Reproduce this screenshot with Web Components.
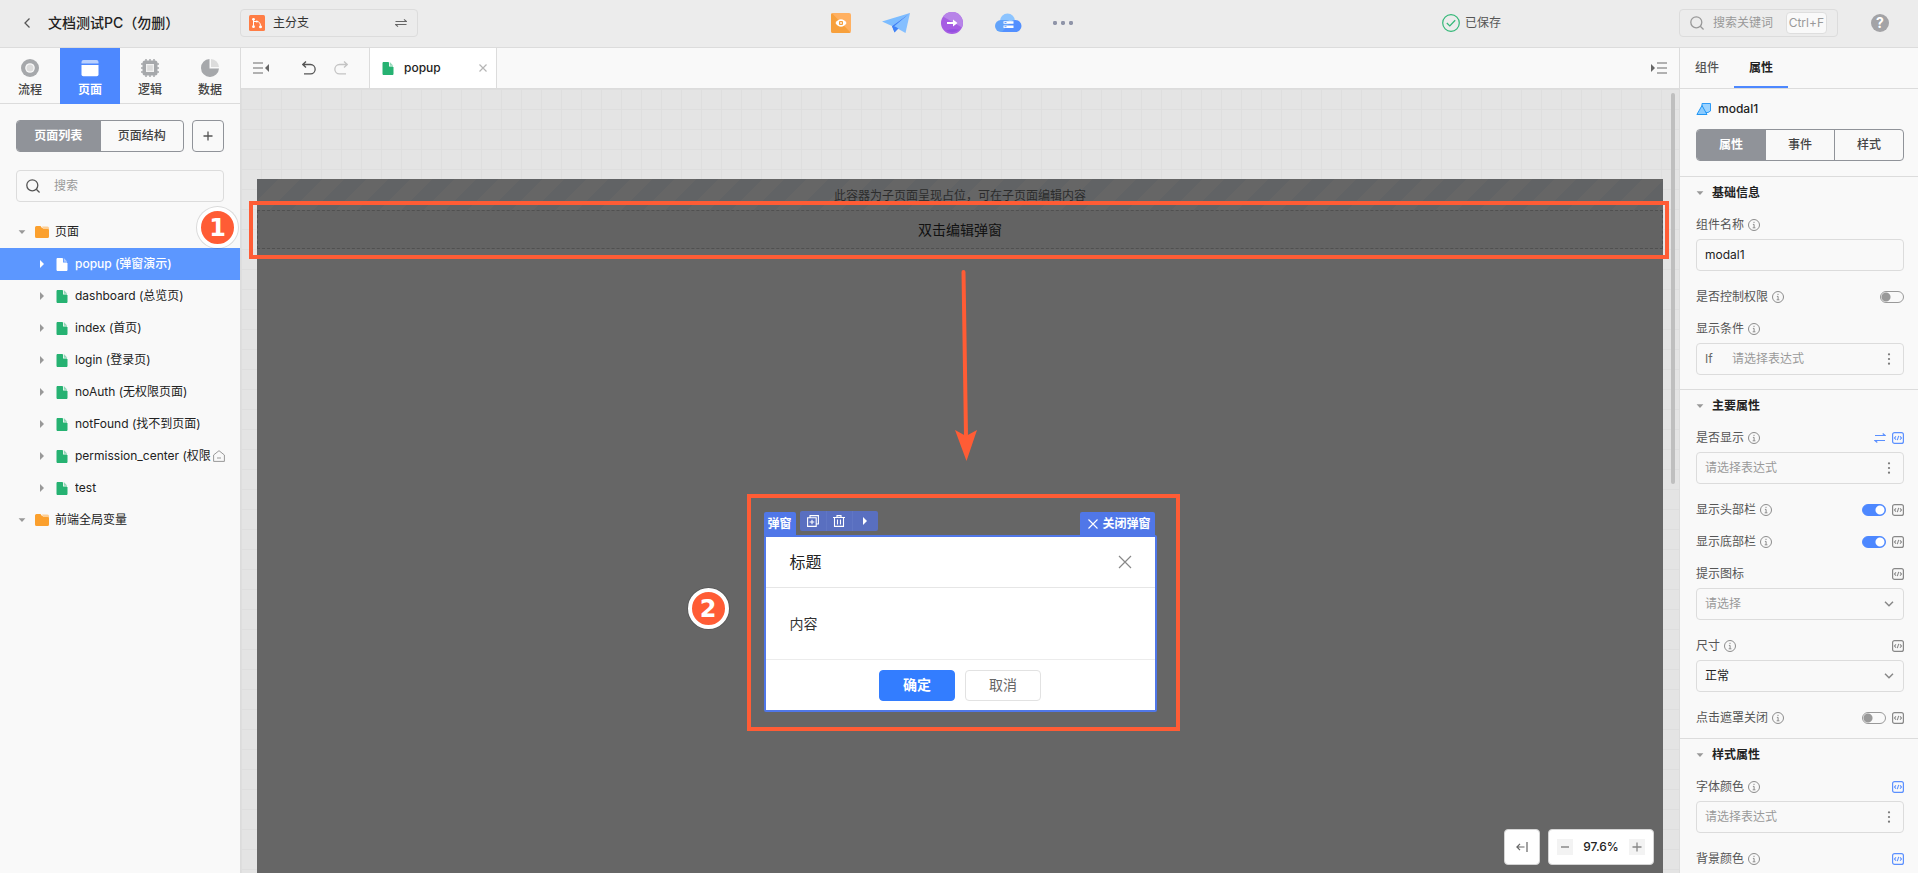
<!DOCTYPE html>
<html lang="zh-CN">
<head>
<meta charset="utf-8">
<title>文档测试PC（勿删）</title>
<style>
html, body { margin: 0; height: 100%; }
body { font: 12px/20px Inter, "Noto Sans CJK SC", sans-serif; color: #222; background: #f9f9f9; overflow: hidden; }
</style>
</head>
<body>
<app-shell></app-shell>
<script>
const BASE = `
*, *::before { box-sizing: border-box; }
button, input, select { font: inherit; color: inherit; margin: 0; padding: 0; border: 0; background: none; outline: 0; min-width: 0; }
button { cursor: pointer; display: flex; align-items: center; justify-content: center; }
input::placeholder { color: #999; opacity: 1; }
a { color: inherit; text-decoration: none; }
`;

function define(name, css, html) {
  customElements.define(name, class extends HTMLElement {
    connectedCallback() {
      if (this.shadowRoot) return;
      const t = document.createElement('template');
      t.innerHTML = `<style>${BASE}${css}</style>${typeof html === 'function' ? html(this) : html}`;
      this.attachShadow({ mode: 'open' }).append(t.content.cloneNode(true));
    }
  });
}

/* name: [width, height, markup] */
const ICONS = {
  back: [8, 12, '<path d="M6.500 1.500 2 6l4.500 4.500" fill="none" stroke="#555" stroke-width="1.300"/>'],
  branch: [16, 16, '<rect width="16" height="16" rx="1.500" fill="#ff7d45"/><path d="M4.500 4.500v7M4.500 6.500h3.200" fill="none" stroke="#fff"/><path d="M8.200 6.500c2 .2 3 1.500 3.300 4" fill="none" stroke="#fff"/><circle cx="4.500" cy="4.300" r="1.400" fill="#fff"/><circle cx="4.500" cy="11.700" r="1.400" fill="#fff"/><circle cx="11.500" cy="11.700" r="1.500" fill="#fff"/><circle cx="7.800" cy="6.500" r="1" fill="#fff"/>'],
  swap: [12, 8, '<path d="M.5 2.500h11L9 .4M11.500 5.500H.5L3 7.600" fill="none" stroke="currentColor" stroke-width="1.100"/>'],
  preview: [20, 20, '<rect width="20" height="20" rx="2" fill="#ffb061"/><path d="M0 2a2 2 0 0 1 1-1.700L19.500 19.500 18 20H2a2 2 0 0 1-2-2z" fill="#f7a03c"/><path d="M4.500 10C6 7.400 7.900 6.300 10 6.300s4 1.100 5.500 3.700c-1.500 2.600-3.400 3.700-5.500 3.700S6 12.600 4.500 10z" fill="#fff"/><rect x="8" y="8" width="4" height="4" rx="1" fill="#f7a03c"/><rect x="9.200" y="9.200" width="1.600" height="1.600" fill="#fff"/>'],
  plane: [28, 20, '<path d="M0 8.500 28 0 10 13z" fill="#7cbcff"/><path d="M28 0 10 13l2.500 6.300z" fill="#3f82f7"/><path d="M28 0 12 13.500 23.500 20z" fill="#85bfff"/><path d="m10 13 3.500.7 3 1.800-4 4z" fill="#3f82f7"/>'],
  publish: [22, 22, '<circle cx="11" cy="11" r="11" fill="#a65de3"/><path d="M2 4.500A11 11 0 0 1 22 11a11 11 0 0 1-1 4.500z" fill="#b784e8"/><path d="M5 18.500q6-2 13-.8A11 11 0 0 1 5 18.500z" fill="#9350e0"/><path d="M6 10h6V7.500l4.500 3.500-4.500 3.500V12H6z" fill="#fff"/>'],
  cloud: [28, 20, '<circle cx="13.500" cy="8" r="7.500" fill="#8cc4ff"/><rect x="1" y="7" width="17" height="12" rx="6" fill="#62a3fa"/><path d="M8 19 17 8.500A6 6 0 0 1 21.500 7a6 6 0 0 1 0 12z" fill="#5390ff"/><path d="M9.500 8.200h10v2.600h-10zM9.500 12.400h10V15h-10z" fill="#fff"/><path d="M10.500 9.500h2M10.500 13.700h2" stroke="#5390ff" stroke-width=".9"/>'],
  dots: [20, 4, '<g fill="#8f94a8"><rect width="4" height="4" rx="1.400"/><rect x="8" width="4" height="4" rx="1.400"/><rect x="16" width="4" height="4" rx="1.400"/></g>'],
  saved: [18, 18, '<circle cx="9" cy="9" r="8.300" fill="none" stroke="#34b878" stroke-width="1.200"/><path d="m4.800 9 3 2.900 5.400-5.600" fill="none" stroke="#34b878" stroke-width="1.300"/>'],
  search: [14, 14, '<circle cx="6.300" cy="6.300" r="5.500" fill="none" stroke="currentColor" stroke-width="1.300"/><path d="m10.300 10.300 3.300 3.200" stroke="currentColor" stroke-width="1.400"/>'],
  flow: [18, 18, '<circle cx="9" cy="9" r="9" fill="#a6a8ab"/><circle cx="9" cy="9" r="4.800" fill="#f9f9f9"/><circle cx="9" cy="9" r="3.500" fill="#dcdcdc"/>'],
  page: [18, 18, '<path d="M.500 4.500V3a2 2 0 0 1 2-2h13a2 2 0 0 1 2 2v1.500z" fill="#b8d0ff"/><path d="M.500 6h17v9.500a1.800 1.800 0 0 1-1.800 1.800H2.300A1.800 1.800 0 0 1 .500 15.500z" fill="#fff"/>'],
  logic: [18, 18, '<path d="M5 0v18M9 0v18M13 0v18M0 5h18M0 9h18M0 13h18" stroke="#a6a8ab" stroke-width="1.500"/><rect x="1.500" y="1.500" width="15" height="15" rx="2.500" fill="#a6a8ab"/><rect x="5" y="5" width="8" height="8" fill="#f1f1f1"/><rect x="6.200" y="6.200" width="5.600" height="5.600" fill="#dcdcdc"/>'],
  data: [18, 18, '<path d="M8.500 0v9.500H18A9 9 0 1 1 8.500 0z" fill="#a6a8ab"/><path d="M10 0a8.500 8.500 0 0 1 8 8h-8z" fill="#dcdcdc"/>'],
  plus: [10, 10, '<path d="M5 .5v9M.500 5h9" stroke="currentColor" stroke-width="1.300"/>'],
  minus: [10, 10, '<path d="M1 5h8" stroke="currentColor" stroke-width="1.500"/>'],
  down: [8, 4, '<path d="M.6.300h6.800L4 3.900z" fill="#999"/>'],
  right: [4, 8, '<path d="M0 0v8l4-4z" fill="currentColor"/>'],
  folder: [14, 12, '<path d="M0 1.500A1.500 1.500 0 0 1 1.500 0h4L7 2h5.500A1.500 1.500 0 0 1 14 3.500v7a1.500 1.500 0 0 1-1.500 1.500h-11A1.500 1.500 0 0 1 0 10.500z" fill="#fba02e"/><path d="M7 .5h5.500A1.500 1.500 0 0 1 14 2v1.500L12.500 3H8z" fill="#fdcf96"/>'],
  file: [12, 14, '<path d="M1 1.500h5.500V6H11v7.500H1z" fill="currentColor" stroke="currentColor" stroke-linejoin="round"/><path d="M7.800 1 11.300 4.700H7.800z" fill="currentColor" opacity=".5"/>'],
  home: [12, 12, '<path d="M.600 5 6 .700 11.400 5v6.400H.600zM4 8h4" fill="none" stroke="#999"/>'],
  foldLeft: [16, 12, '<path d="M0 1h10M0 6h10M0 11h10" stroke="#999" stroke-width="1.600"/><path d="M16 2v8l-4-4z" fill="#666"/>'],
  foldRight: [16, 12, '<path d="M6 1h10M6 6h10M6 11h10" stroke="#999" stroke-width="1.600"/><path d="M0 2v8l4-4z" fill="#666"/>'],
  undo: [14, 14, '<path d="M4 .5.800 3.500 4 6.500M1 3.500h7.500a4.600 4.600 0 0 1 0 9.300H2" fill="none" stroke="currentColor" stroke-width="1.300"/>'],
  redo: [14, 14, '<path d="m10 .5 3.200 3-3.200 3M13 3.500H5.500a4.600 4.600 0 0 0 0 9.300H12" fill="none" stroke="currentColor" stroke-width="1.300"/>'],
  close: [8, 8, '<path d="m.500.500 7 7m0-7-7 7" stroke="currentColor" stroke-width="1.200"/>'],
  closeTag: [10, 10, '<path d="m.500.500 9 9m0-9-9 9" stroke="currentColor" stroke-width="1.100"/>'],
  closeBig: [14, 14, '<path d="m1 1 12 12m0-12L1 13" stroke="#888" stroke-width="1.200"/>'],
  info: [12, 12, '<circle cx="6" cy="6" r="5.500" fill="none" stroke="#8c8c8c"/><path d="M6 2.800v1.200M4.900 5.400h1.200v3.300M4.700 8.800h2.700" fill="none" stroke="#8c8c8c"/>'],
  code: [12, 12, '<rect x=".6" y=".6" width="10.800" height="10.800" rx="2" fill="none" stroke="currentColor" stroke-width="1.200"/><path d="M4 4.300 2.500 6 4 7.700M8 4.300 9.500 6 8 7.700M6.700 3.900 5.300 8.100" fill="none" stroke="currentColor" stroke-width="1.100"/>'],
  swapBlue: [12, 10, '<path d="M1 2.500h10L8.700.5M11 7.500H1l2.300 2" fill="none" stroke="currentColor" stroke-width="1.200"/>'],
  more: [4, 12, '<g fill="#777"><circle cx="2" cy="1.300" r="1.100"/><circle cx="2" cy="6" r="1.100"/><circle cx="2" cy="10.700" r="1.100"/></g>'],
  chevron: [10, 6, '<path d="m1 .800 4 4 4-4" fill="none" stroke="#888" stroke-width="1.500"/>'],
  modal: [16, 12, '<path d="M6 .5h8.500v7.500l-2.500 1.500H6z" fill="#9cd3ff" stroke="#2f9bf7"/><path d="M6 2.500 11 11.500H.900z" fill="#8acbff" stroke="#2196f3"/>'],
  copy: [12, 12, '<path d="M3 2.500V.600h8.400V9H9.500M.600 2.800h8.600v8.600H.600zM5 4.800V9.300M2.600 7h4.700" fill="none" stroke="#fff" stroke-width="1.100"/>'],
  trash: [12, 12, '<path d="M0 2.500h12M4 2.200V.600h4v1.600M1.500 2.500v8.900h9V2.500M4.500 4.500v5M7.500 4.500v5" fill="none" stroke="#fff" stroke-width="1.100"/>'],
  fit: [12, 12, '<path d="M8.500 6H1M4 2.800.900 6 4 9.200M11 1v10" fill="none" stroke="#666" stroke-width="1.200"/>'],
  arrow: [24, 192, '<path d="m9.500 3 2.500 164" stroke="#ff5c35" stroke-width="4" stroke-linecap="round"/><path d="m1 161 11 6 11-6-10.500 31z" fill="#ff5c35"/>']
};
customElements.define('ui-icon', class extends HTMLElement {
  connectedCallback() {
    if (this.shadowRoot) return;
    const [w, h, body] = ICONS[this.getAttribute('name')];
    this.attachShadow({ mode: 'open' }).innerHTML =
      `<style>:host{display:inline-flex;flex:none}svg{display:block}</style>
       <svg width="${w}" height="${h}" viewBox="0 0 ${w} ${h}" aria-hidden="true">${body}</svg>`;
  }
});
const ic = n => `<ui-icon name="${n}"></ui-icon>`;

define('app-shell', `
:host { display: grid; height: 100vh; grid-template: 48px minmax(0, 1fr) / 241px minmax(0, 1fr) 239px; }
app-header { grid-column: 1 / -1; }
main { display: flex; flex-direction: column; min-width: 0; }
design-canvas { flex: 1; min-height: 0; }
`, `<app-header></app-header><side-panel></side-panel>
<main><editor-bar></editor-bar><design-canvas></design-canvas></main><prop-panel></prop-panel>`);

define('app-header', `
:host { display: grid; grid-template-columns: 1fr auto 1fr; align-items: center; background: #ececec; border-bottom: 1px solid #dcdcdc; padding-bottom: 1px; }
.left, .mid, .right { display: flex; align-items: center; }
.title { display: flex; align-items: center; width: 240px; padding-left: 15px; gap: 9px; }
.title button { width: 24px; height: 24px; }
h1 { margin: 0; font-size: 14px; font-weight: 500; }
.branch { width: 178px; height: 28px; border: 1px solid #dcdcdc; border-radius: 4px; padding: 0 10px 0 8px; gap: 8px; justify-content: flex-start; color: #333; }
.branch span { flex: 1; text-align: left; }
.branch ui-icon:last-child { color: #666; }
.mid { padding-right: 15px; gap: 31px; }
.mid button { height: 28px; }
.right { justify-content: flex-end; padding-right: 29px; }
.saved { display: flex; align-items: center; gap: 5px; margin-right: 178px; color: #555; }
.search { display: flex; align-items: center; gap: 9px; width: 159px; height: 28px; border: 1px solid #dcdcdc; border-radius: 4px; padding: 0 10px; color: #999; margin-right: 33px; }
.search input { flex: 1; width: 60px; }
kbd { font: inherit; height: 22px; padding: 0 2px; background: #f9f9f9; border: 1px solid #dedede; border-radius: 4px; }
.help { width: 18px; height: 18px; border-radius: 9px; background: #a3a3a6; color: #fff; font-size: 14px; font-weight: 700; }
`, `<div class="left"><div class="title"><button aria-label="返回">${ic('back')}</button><h1>文档测试PC（勿删）</h1></div>
<button class="branch">${ic('branch')}<span>主分支</span>${ic('swap')}</button></div>
<nav class="mid"><button aria-label="预览">${ic('preview')}</button><button aria-label="发送">${ic('plane')}</button><button aria-label="发布">${ic('publish')}</button><button aria-label="云">${ic('cloud')}</button><button aria-label="更多">${ic('dots')}</button></nav>
<div class="right"><div class="saved">${ic('saved')}<span>已保存</span></div>
<label class="search">${ic('search')}<input aria-label="搜索关键词" placeholder="搜索关键词"><kbd>Ctrl+F</kbd></label>
<button class="help">?</button></div>`);

define('seg-control', `
:host { display: flex; height: 32px; border: 1px solid #909399; border-radius: 4px; overflow: hidden; }
button { flex: 1; color: #444; font-weight: 500; }
button + button { border-left: 1px solid #909399; }
button.on { background: #909399; color: #fff; font-weight: 700; }
`, el => el.getAttribute('items').split(',').map((t, i) => `<button class="${i ? '' : 'on'}">${t}</button>`).join(''));

define('nav-tab', `
:host { display: flex; width: 60px; height: 56px; border-bottom: 1px solid #dcdcdc; }
:host([active]) { background: #4d88ff; color: #fff; border-color: #4d88ff; }
button { width: 100%; flex-direction: column; gap: 3px; font-weight: 500; color: #444; padding-top: 8px; }
:host([active]) button { color: #fff; font-weight: 700; }
`, el => `<button>${ic(el.getAttribute('icon'))}<span><slot></slot></span></button>`);

define('tree-item', `
:host { display: flex; align-items: center; height: 32px; padding: 0 15px 0 40px; color: #222; }
:host([group]) { padding-left: 18px; }
:host([active]) { background: #5c97ff; color: #fff; font-weight: 500; }
.caret, .file { display: flex; }
.caret { color: #999; margin-right: 12px; }
:host([active]) .caret { color: #fff; }
.file { color: #26b272; margin-right: 7px; }
:host([active]) .file { color: #fff; }
:host([group]) .caret { margin-right: 9px; }
:host([group]) .file { margin-right: 6px; }
a { flex: 1; overflow: hidden; white-space: nowrap; margin-right: 2px; }
`, el => {
  const g = el.hasAttribute('group');
  return `<span class="caret">${ic(g ? 'down' : 'right')}</span><span class="file">${ic(g ? 'folder' : 'file')}</span><a href="#"><slot></slot></a>${el.hasAttribute('home') ? ic('home') : ''}`;
});

define('side-panel', `
:host { display: flex; flex-direction: column; border-right: 1px solid #dcdcdc; background: #f9f9f9; position: relative; }
.tabs { display: flex; }
.row { display: flex; gap: 8px; padding: 16px 16px 18px; }
seg-control { flex: 1; }
.add { width: 32px; height: 32px; border: 1px solid #909399; border-radius: 4px; color: #555; }
.search { display: flex; align-items: center; gap: 14px; height: 32px; margin: 0 16px 14px; padding: 0 9px; border: 1px solid #dcdcdc; border-radius: 4px; color: #555; }
.search input { flex: 1; }
step-badge { position: absolute; left: 197px; top: 159px; z-index: 2; }
`, `<nav class="tabs"><nav-tab icon="flow">流程</nav-tab><nav-tab icon="page" active>页面</nav-tab><nav-tab icon="logic">逻辑</nav-tab><nav-tab icon="data">数据</nav-tab></nav>
<div class="row"><seg-control items="页面列表,页面结构"></seg-control><button class="add" aria-label="新增">${ic('plus')}</button></div>
<label class="search">${ic('search')}<input aria-label="搜索" placeholder="搜索"></label>
<tree-item group>页面</tree-item><tree-item active>popup (弹窗演示)</tree-item><tree-item>dashboard (总览页)</tree-item><tree-item>index (首页)</tree-item><tree-item>login (登录页)</tree-item><tree-item>noAuth (无权限页面)</tree-item><tree-item>notFound (找不到页面)</tree-item><tree-item home>permission_center (权限中心)</tree-item><tree-item>test</tree-item><tree-item group>前端全局变量</tree-item>
<step-badge>1</step-badge>`);

define('step-badge', `
:host { display: flex; box-sizing: border-box; align-items: center; justify-content: center; width: 41px; height: 41px; border: 4px solid #fff; border-radius: 21px; background: #ff5c35; color: #fff; font: 700 24px/24px "DejaVu Sans", sans-serif; box-shadow: 0 0 0 1px #0000001f; }
`, `<slot></slot>`);

define('editor-bar', `
:host { display: flex; box-sizing: border-box; align-items: center; height: 41px; background: #f9f9f9; border-bottom: 1px solid #dcdcdc; padding: 0 12px; }
.u { margin-left: 33px; color: #555; }
.r { margin-left: 18px; color: #c4c4c4; }
.tab { display: flex; align-items: center; width: 128px; height: 40px; margin-left: 21px; padding: 0 9px 0 12px; border: solid #dcdcdc; border-width: 0 1px; background: #fff; }
.tab ui-icon { color: #26b272; }
.tab a { flex: 1; margin-left: 10px; font-weight: 500; }
.x ui-icon { color: #b5b5b5; }
.end { margin-left: auto; }
`, `<button aria-label="收起左侧">${ic('foldLeft')}</button><button class="u" aria-label="撤销">${ic('undo')}</button><button class="r" aria-label="重做">${ic('redo')}</button>
<div class="tab">${ic('file')}<a href="#">popup</a><button class="x" aria-label="关闭">${ic('close')}</button></div>
<button class="end" aria-label="收起右侧">${ic('foldRight')}</button>`);

define('design-canvas', `
:host { display: block; position: relative; overflow: hidden; padding: 90px 16px 0; background: linear-gradient(#dedede 1px, transparent 1px) 0 0 / 20px 20px, linear-gradient(90deg, #dedede 1px, transparent 1px) 0 0 / 20px 20px, #e4e4e4; }
.stage { height: 100%; background: #666; }
.sub { height: 31px; padding-top: 2px; display: flex; align-items: center; justify-content: center; color: #2c2c2c; white-space: nowrap; background: linear-gradient(135deg, #616365 25%, #666 25% 50%, #616365 50% 75%, #666 75%) 0 0 / 44px 44px; }
.slot { position: relative; height: 39px; display: flex; align-items: center; justify-content: center; border: 1px dashed #505050; background: #636363; color: #111; font-size: 14px; }
.mark { position: absolute; border: 4px solid #ff5c35; pointer-events: none; }
.slot .mark { inset: -10px -7px -11px -9px; }
.slot .arrow { position: absolute; top: 58px; left: calc(50% - 6px); }
modal-preview { margin: 286px auto 0; }
.thumb { position: absolute; right: 4px; top: 4px; width: 4px; height: 391px; border-radius: 2px; background: #bfbfbf; }
.tools { position: absolute; right: 25px; bottom: 8px; display: flex; gap: 8px; }
.box { display: flex; align-items: center; height: 36px; background: #fff; border: 1px solid #d4d4d4; border-radius: 4px; }
button.box { width: 36px; }
.zoom { width: 106px; justify-content: space-between; padding: 0 8px; font-weight: 500; }
.zoom button { width: 16px; height: 16px; background: #f3f3f3; color: #888; }
`, `<div class="stage"><div class="sub">此容器为子页面呈现占位，可在子页面编辑内容</div>
<div class="slot">双击编辑弹窗<div class="mark"></div><div class="arrow">${ic('arrow')}</div></div>
<modal-preview></modal-preview></div>
<div class="thumb"></div>
<div class="tools"><button class="box" aria-label="适应">${ic('fit')}</button><div class="box zoom"><button aria-label="缩小">${ic('minus')}</button><span>97.6%</span><button aria-label="放大">${ic('plus')}</button></div></div>`);

define('modal-preview', `
:host { display: block; box-sizing: border-box; position: relative; width: 393px; border: 2px solid #5077e8; background: #fff; border-radius: 2px; }
header { display: flex; align-items: center; justify-content: space-between; height: 51px; padding: 0 23px 0 24px; border-bottom: 1px solid #e6e6e6; }
h2 { margin: 0; font-size: 16px; font-weight: 400; line-height: 24px; color: #222; }
.body { height: 71px; display: flex; align-items: center; padding: 0 24px; font-size: 14px; color: #333; }
footer { height: 51px; display: flex; align-items: center; justify-content: center; gap: 10px; border-top: 1px solid #ececec; font-size: 14px; }
footer button { width: 76px; height: 31px; border-radius: 4px; border: 1px solid #e2e2e2; color: #666; }
footer .ok { background: #337dff; border-color: #337dff; color: #fff; font-weight: 700; }
.tag, .ops, .shut, .mark, step-badge { position: absolute; }
.tag, .shut { top: -25px; height: 24px; padding: 0 4px; background: #5077e8; color: #fff; font-weight: 700; line-height: 24px; border-radius: 2px 2px 0 0; }
.tag { left: -2px; }
.shut { right: 0; gap: 4px; padding: 0 4px 0 8px; }
.ops { left: 34px; top: -26px; display: flex; height: 20px; background: #596fc0; border-radius: 2px; color: #fff; }
.ops button { width: 26px; }
.ops button + button { border-left: 1px solid #6076c4; }
.mark { left: -19px; right: -25px; top: -43px; bottom: -21px; border: 4px solid #ff5c35; pointer-events: none; }
step-badge { left: -78px; top: 51px; }
`, `<span class="tag">弹窗</span><div class="ops"><button aria-label="复制">${ic('copy')}</button><button aria-label="删除">${ic('trash')}</button><button aria-label="更多">${ic('right')}</button></div>
<button class="shut">${ic('closeTag')}关闭弹窗</button>
<header><h2>标题</h2><button aria-label="关闭">${ic('closeBig')}</button></header>
<div class="body">内容</div>
<footer><button class="ok">确定</button><button>取消</button></footer>
<div class="mark"></div><step-badge>2</step-badge>`);

/* kind: input | expr | select; sw: on/off switch; code: grey/blue expression toggle */
define('prop-field', `
:host { display: block; margin-bottom: 12px; }
:host([inline]) { margin-bottom: 4px; }
.head { display: flex; align-items: center; height: 28px; color: #555; gap: 4px; }
.acts { margin-left: auto; display: flex; align-items: center; gap: 6px; color: #888; }
.acts.blue { color: #5b90ff; }
.sw { appearance: none; display: block; width: 24px; height: 12px; border: 1px solid #999; border-radius: 6px; background: radial-gradient(circle at 5px 5px, #999 4px, transparent 5px); }
.sw:checked { border-color: #4d88ff; background: radial-gradient(circle at 17px 5px, #fff 4px, #4d88ff 5px); }
.box { display: flex; align-items: center; height: 32px; border: 1px solid #dcdcdc; border-radius: 4px; padding: 0 12px 0 8px; color: #222; }
.box input { flex: 1; width: 100%; }
.box select { flex: 1; appearance: none; }
.box select.ph { color: #999; }
.sel { padding-right: 9px; padding-left: 8px; }
.if { width: 27px; color: #666; }
`, el => {
  const a = n => el.getAttribute(n), k = a('kind'), v = a('value') || '', l = a('label');
  const body = {
    input: `<div class="box"><input id="c" value="${v}"></div>`,
    expr: `<div class="box">${el.hasAttribute('cond') ? '<span class="if">If</span>' : ''}<input id="c" placeholder="请选择表达式">${ic('more')}</div>`,
    select: `<div class="box sel"><select id="c" class="${v === '请选择' ? 'ph' : ''}"><option>${v}</option></select>${ic('chevron')}</div>`
  }[k] || '';
  const sw = a('sw') ? `<input type="checkbox" class="sw" id="c" ${a('sw') === 'on' ? 'checked' : ''}>` : '';
  return `<div class="head"><label for="c">${l}</label>${el.hasAttribute('noinfo') ? '' : ic('info')}
<span class="acts ${a('code') || ''}">${el.hasAttribute('swap') ? ic('swapBlue') : ''}${sw}${a('code') ? ic('code') : ''}</span></div>${body}`;
});

define('prop-section', `
:host { display: block; border-top: 1px solid #dcdcdc; padding: 0 14px 2px 16px; }
h3 { display: flex; align-items: center; height: 32px; margin: 0 0 2px; gap: 8px; font-size: 12px; font-weight: 700; color: #222; }
`, el => `<h3>${ic('down')}${el.getAttribute('heading')}</h3><slot></slot>`);

define('prop-panel', `
:host { display: block; border-left: 1px solid #dcdcdc; background: #f9f9f9; overflow: hidden; }
.tabs { display: flex; height: 41px; border-bottom: 1px solid #dcdcdc; color: #555; }
.tabs button { width: 54px; height: 40px; border-bottom: 2px solid transparent; padding-top: 2px; font-weight: 500; }
.tabs button.on { color: #222; border-color: #4d88ff; font-weight: 700; }
.name { display: flex; align-items: center; gap: 6px; height: 40px; padding-left: 16px; font-weight: 500; }
seg-control { margin: 0 14px 15px 16px; }
`, `<div class="tabs"><button>组件</button><button class="on">属性</button></div>
<div class="name">${ic('modal')}modal1</div>
<seg-control items="属性,事件,样式"></seg-control>
<prop-section heading="基础信息"><prop-field label="组件名称" kind="input" value="modal1"></prop-field><prop-field label="是否控制权限" inline sw="off"></prop-field><prop-field label="显示条件" kind="expr" cond></prop-field></prop-section>
<prop-section heading="主要属性"><prop-field label="是否显示" kind="expr" swap code="blue"></prop-field><prop-field label="显示头部栏" inline sw="on" code="grey"></prop-field><prop-field label="显示底部栏" inline sw="on" code="grey"></prop-field><prop-field label="提示图标" noinfo kind="select" value="请选择" code="grey"></prop-field><prop-field label="尺寸" kind="select" value="正常" code="grey"></prop-field><prop-field label="点击遮罩关闭" inline sw="off" code="grey"></prop-field></prop-section>
<prop-section heading="样式属性"><prop-field label="字体颜色" kind="expr" code="blue"></prop-field><prop-field label="背景颜色" kind="expr" code="blue"></prop-field></prop-section>`);
</script>
</body>
</html>
